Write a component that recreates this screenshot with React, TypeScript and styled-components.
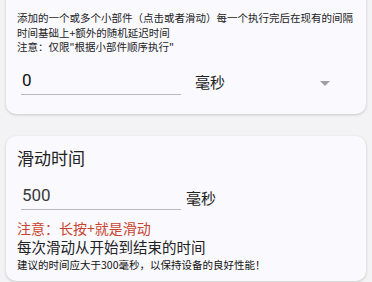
import styled, { createGlobalStyle } from "styled-components";

const GlobalStyle = createGlobalStyle`
  body {
    margin: 0;
    background: #f3f3f6;
    font-family: "Roboto", "Noto Sans CJK SC", sans-serif;
    color: #222;
  }
`;

const Page = styled.div`
  height: 282px;
  overflow: hidden;
  padding: 0 6px;
  display: flex;
  flex-direction: column;
  gap: 22px;
`;

const Card = styled.div<{ $top?: boolean }>`
  background: #f9f9fe;
  border-radius: 10px;
  box-shadow: 0 1px 3px rgba(0, 0, 0, 0.18);
  padding: ${(p) => (p.$top ? "31px 11px 0" : "11px 11px 0")};
  margin-top: ${(p) => (p.$top ? "-20px" : "0")};
  height: ${(p) => (p.$top ? "134px" : "145px")};
  flex-shrink: 0;
  box-sizing: border-box;
`;

const Description = styled.div`
  font-family: "Noto Sans CJK SC", sans-serif;
  font-size: 10.5px;
  line-height: 14.5px;
  color: #222;
`;

const Title = styled.div`
  font-family: "Noto Sans CJK SC", sans-serif;
  font-size: 17px;
  line-height: 22px;
  color: #222;
`;

const InputRow = styled.div<{ $gap: number; $mt: number }>`
  display: flex;
  align-items: center;
  gap: ${(p) => p.$gap}px;
  margin-top: ${(p) => p.$mt}px;
  padding-left: 4px;
`;

const Field = styled.div<{ $muted?: boolean }>`
  width: 160px;
  font-size: 17px;
  line-height: 20px;
  padding: 0 0 4px 1px;
  border-bottom: 1px solid #b9b9bd;
  color: ${(p) => (p.$muted ? "#3a3a3a" : "#111")};
  box-sizing: border-box;
`;

const Unit = styled.span`
  font-family: "Noto Sans CJK SC", sans-serif;
  font-size: 15px;
  line-height: 20px;
  color: #222;
`;

const Caret = styled.svg`
  margin-left: auto;
  margin-right: 25px;
  margin-top: 2px;
`;

const Warning = styled.div`
  font-family: "Noto Sans CJK SC", sans-serif;
  font-size: 14px;
  line-height: 18px;
  color: #c8432d;
  margin-top: 9px;
`;

const Hint = styled.div`
  font-family: "Noto Sans CJK SC", sans-serif;
  font-size: 14.5px;
  line-height: 20px;
  color: #222;
`;

const SmallHint = styled.div`
  font-family: "Noto Sans CJK SC", sans-serif;
  font-size: 10.5px;
  line-height: 14px;
  margin-top: 1px;
  color: #111;
`;

export default function App() {
  return (
    <>
      <GlobalStyle />
      <Page>
        <Card $top>
          <Description>
            添加的一个或多个小部件（点击或者滑动）每一个执行完后在现有的间隔时间基础上+额外的随机延迟时间
            <br />
            注意：仅限"根据小部件顺序执行"
          </Description>
          <InputRow $gap={14} $mt={15}>
            <Field>0</Field>
            <Unit>毫秒</Unit>
            <Caret width="10" height="5" viewBox="0 0 10 5">
              <path d="M0 0 L10 0 L5 5 Z" fill="#a0a0a4" />
            </Caret>
          </InputRow>
        </Card>
        <Card>
          <Title>滑动时间</Title>
          <InputRow $gap={5} $mt={16}>
            <Field $muted>500</Field>
            <Unit>毫秒</Unit>
          </InputRow>
          <Warning>注意：长按+就是滑动</Warning>
          <Hint>每次滑动从开始到结束的时间</Hint>
          <SmallHint>建议的时间应大于300毫秒，以保持设备的良好性能！</SmallHint>
        </Card>
      </Page>
    </>
  );
}
